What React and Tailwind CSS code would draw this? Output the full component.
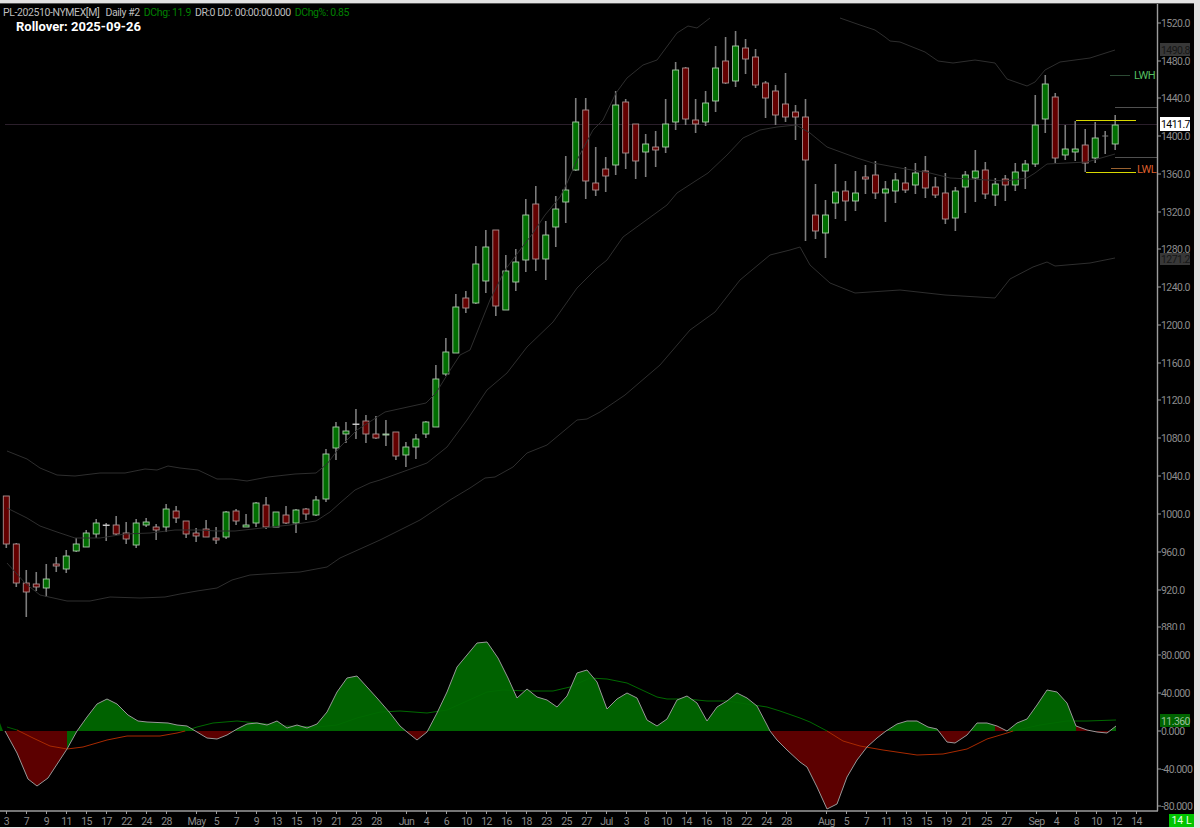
// Daily futures chart: candles with bands up top, oscillator below, price + time axes.
// All numbers are pixel positions on the 1200x828 page, the svg viewBox is offset to match.
const candles = [
  ["r", 496, 544, 496, 548], ["r", 544, 583, 543, 587], ["r", 583, 592, 570, 617], ["r", 584, 587, 572, 591],
  ["g", 579, 588, 564, 597], ["r", 564, 566, 557, 572], ["g", 556, 569, 550, 573], ["g", 544, 551, 538, 552],
  ["g", 533, 547, 530, 547], ["g", 523, 534, 519, 538], ["w", 525, 525.5, 523, 541], ["r", 525, 534, 516, 535],
  ["r", 533, 539, 522, 544], ["g", 523, 545, 519, 548], ["g", 522, 525, 518, 527], ["r", 527, 530, 524, 540],
  ["g", 509, 527, 504, 532], ["r", 511, 518, 506, 523], ["r", 521, 534, 521, 538], ["r", 533, 536, 528, 542],
  ["r", 529, 537, 520, 537], ["r", 538, 540, 527, 544], ["g", 512, 537, 511, 539], ["r", 511, 521, 509, 525],
  ["g", 525, 527, 514, 527], ["g", 503, 523, 502, 527], ["r", 505, 527, 497, 529], ["g", 512, 527, 512, 527],
  ["r", 515, 523, 506, 524], ["g", 510, 523, 509, 533], ["r", 509, 514, 508, 520], ["g", 500, 515, 496, 516],
  ["g", 454, 499, 449, 502], ["g", 427, 448, 422, 460], ["g", 431, 434, 422, 443], ["w", 424, 424.5, 409, 439],
  ["r", 421, 434, 415, 443], ["r", 434, 438, 416, 439], ["g", 434, 435, 420, 446], ["r", 432, 456, 432, 460],
  ["g", 447, 455, 442, 467], ["g", 439, 447, 434, 459], ["g", 422, 434, 421, 438], ["g", 379, 427, 365, 427],
  ["g", 352, 374, 338, 376], ["g", 307, 353, 294, 353], ["r", 298, 308, 291, 313], ["g", 264, 303, 246, 304],
  ["g", 247, 281, 230, 293], ["r", 230, 306, 230, 316], ["g", 271, 310, 255, 310], ["g", 262, 282, 249, 291],
  ["g", 215, 260, 199, 272], ["r", 204, 259, 186, 271], ["g", 235, 259, 221, 280], ["g", 209, 227, 196, 247],
  ["g", 190, 202, 156, 223], ["g", 122, 170, 98, 171], ["r", 110, 181, 98, 199], ["r", 183, 190, 147, 196],
  ["r", 169, 176, 157, 192], ["g", 105, 165, 91, 175], ["r", 102, 153, 99, 169], ["r", 124, 161, 124, 179],
  ["g", 144, 152, 134, 177], ["r", 147, 150, 131, 167], ["g", 124, 147, 99, 153], ["g", 70, 122, 62, 130],
  ["r", 68, 119, 67, 125], ["r", 120, 124, 99, 133], ["g", 103, 122, 91, 126], ["g", 68, 101, 46, 112],
  ["r", 61, 83, 37, 84], ["g", 46, 81, 31, 87], ["r", 48, 59, 39, 74], ["r", 57, 85, 49, 88],
  ["r", 83, 98, 81, 118], ["r", 91, 115, 85, 125], ["r", 104, 117, 73, 122], ["r", 112, 117, 105, 140],
  ["r", 117, 160, 99, 241], ["r", 215, 231, 184, 239], ["g", 215, 233, 200, 258], ["g", 192, 203, 164, 219],
  ["r", 191, 201, 181, 221], ["g", 193, 201, 171, 211], ["r", 177, 179, 165, 194], ["r", 175, 193, 161, 199],
  ["g", 189, 193, 181, 222], ["g", 180, 191, 173, 203], ["r", 183, 190, 167, 193], ["g", 173, 185, 163, 194],
  ["r", 171, 188, 156, 198], ["r", 187, 195, 177, 198], ["r", 193, 219, 173, 224], ["g", 191, 218, 187, 231],
  ["g", 175, 187, 171, 213], ["g", 171, 178, 150, 202], ["r", 170, 194, 162, 199], ["g", 184, 195, 178, 206],
  ["r", 179, 185, 175, 201], ["g", 172, 185, 163, 191], ["g", 164, 171, 160, 189], ["g", 125, 164, 95, 167],
  ["g", 84, 119, 75, 133], ["r", 97, 158, 93, 163], ["g", 149, 155, 125, 160], ["g", 149, 152, 121, 161],
  ["r", 145, 163, 129, 172], ["g", 138, 158, 122, 163], ["d", 136, 136, 131, 154], ["g", 125, 144, 115, 150],
];

const bands = [
  [[7, 451], [27, 459], [40, 468], [57, 475], [75, 476], [100, 473], [125, 473], [145, 469], [157, 470], [168, 466], [180, 468], [198, 470], [217, 479], [232, 479], [247, 481], [268, 477], [295, 474], [316, 473], [327, 464], [340, 447], [357, 430], [385, 412], [426, 403], [436, 393], [447, 375], [460, 355], [470, 350], [480, 325], [490, 300], [505, 270], [520, 250], [533, 233], [545, 215], [560, 197], [567, 183], [577, 160], [593, 130], [603, 120], [616, 93], [627, 78], [643, 65], [657, 60], [677, 33], [688, 26], [697, 28], [710, 18]],
  [[840, 18], [860, 25], [875, 30], [885, 37], [890, 41], [900, 42], [915, 48], [925, 52], [938, 61], [953, 63], [975, 60], [995, 63], [1007, 79], [1027, 86], [1035, 82], [1045, 70], [1060, 62], [1090, 58], [1115, 50]],
  [[7, 508], [27, 518], [40, 526], [57, 532], [75, 538], [100, 538], [125, 534], [150, 533], [175, 530], [200, 530], [217, 531], [235, 531], [262, 528], [290, 525], [316, 521], [330, 512], [340, 503], [355, 490], [370, 483], [380, 480], [427, 463], [447, 447], [467, 420], [487, 390], [507, 373], [527, 347], [553, 322], [577, 288], [597, 268], [607, 260], [623, 237], [667, 205], [677, 193], [697, 180], [708, 173], [727, 155], [743, 138], [760, 130], [777, 127], [796, 125], [810, 133], [827, 147], [857, 158], [873, 163], [900, 168], [930, 173], [950, 178], [987, 180], [1005, 181], [1027, 178], [1035, 173], [1047, 164], [1087, 162], [1115, 154]],
  [[7, 563], [25, 583], [40, 595], [67, 601], [90, 601], [110, 597], [140, 598], [165, 597], [180, 594], [197, 591], [217, 588], [232, 580], [250, 575], [265, 574], [300, 572], [327, 567], [340, 558], [380, 540], [420, 520], [450, 500], [470, 488], [485, 478], [495, 477], [513, 467], [527, 453], [547, 445], [577, 420], [587, 419], [600, 412], [625, 395], [660, 365], [690, 330], [715, 312], [740, 280], [770, 255], [790, 250], [800, 247], [810, 265], [830, 283], [855, 293], [900, 290], [945, 295], [995, 298], [1010, 279], [1033, 267], [1047, 262], [1055, 266], [1090, 263], [1115, 258]],
];

const osc = [[0, 723], [3, 731], [5, 731], [17, 753], [28, 779], [37, 786], [48, 778], [67, 749], [77, 731], [87, 717], [97, 704], [107, 699], [117, 704], [128, 715], [138, 721], [147, 722], [168, 723], [177, 725], [187, 726], [197, 732], [207, 738], [217, 739], [227, 735], [237, 729], [247, 724], [257, 723], [267, 725], [277, 721], [287, 728], [297, 725], [307, 728], [317, 724], [327, 712], [337, 692], [347, 678], [357, 676], [367, 687], [377, 698], [390, 713], [400, 726], [407, 732], [417, 740], [427, 732], [437, 713], [447, 692], [457, 667], [467, 655], [477, 643], [487, 642], [498, 658], [508, 678], [517, 698], [527, 689], [537, 697], [547, 700], [557, 707], [567, 696], [577, 673], [587, 670], [597, 682], [607, 709], [617, 699], [627, 693], [637, 698], [647, 720], [657, 726], [667, 719], [677, 700], [687, 696], [697, 703], [707, 721], [717, 707], [727, 701], [737, 693], [747, 698], [757, 706], [767, 725], [770, 731], [777, 740], [787, 750], [800, 762], [807, 767], [817, 787], [827, 809], [837, 804], [847, 777], [857, 760], [867, 747], [877, 738], [886, 731], [897, 724], [907, 721], [917, 721], [928, 727], [937, 729], [947, 742], [955, 743], [967, 735], [977, 723], [987, 723], [997, 726], [1007, 731], [1017, 723], [1027, 719], [1037, 705], [1047, 690], [1057, 692], [1067, 703], [1076, 726], [1087, 730], [1097, 732], [1107, 733], [1116, 726]];

// colour of the filled area is not just the sign, it flips a bit off the zero line
const areas = [
  ["g", 0, 3], ["r", 5, 67], ["g", 67, 195], ["r", 195, 233], ["g", 233, 406], ["r", 406, 427], ["g", 427, 770], ["r", 770, 886],
  ["g", 886, 938], ["r", 938, 970], ["g", 970, 995], ["r", 995, 1007], ["g", 1007, 1076], ["r", 1076, 1110], ["g", 1110, 1116],
];

const signal = [
  ["#005c00", [[7, 727], [17, 730]]],
  ["#a82a00", [[17, 730], [33, 738], [50, 746], [67, 749], [83, 747], [107, 740], [127, 736], [160, 736], [177, 733], [185, 731]]],
  ["#006a00", [[185, 731], [197, 727], [213, 723], [237, 721], [257, 723], [283, 726], [317, 727], [337, 725], [357, 718], [380, 712], [400, 711], [427, 713], [447, 710], [467, 701], [487, 692], [503, 690], [527, 691], [553, 691], [570, 687], [590, 678], [607, 679], [627, 683], [657, 697], [667, 699], [687, 699], [707, 701], [727, 701], [747, 704], [767, 707], [780, 711], [800, 718], [810, 722], [827, 731]]],
  ["#a82a00", [[827, 731], [843, 741], [860, 746], [883, 750], [917, 755], [943, 754], [967, 749], [987, 739], [1007, 733], [1013, 731]]],
  ["#006a00", [[1013, 731], [1040, 725], [1067, 721], [1087, 721], [1116, 720]]],
];

const prices = [
  ["1520.0", 23], ["1480.0", 61], ["1440.0", 98], ["1400.0", 136], ["1360.0", 174], ["1320.0", 212], ["1280.0", 249],
  ["1240.0", 287], ["1200.0", 325], ["1160.0", 363], ["1120.0", 400], ["1080.0", 438], ["1040.0", 476], ["1000.0", 514],
  ["960.0", 552], ["920.0", 590], ["880.0", 627], ["80.000", 655], ["40.000", 693], ["0.000", 731], ["-40.000", 769], ["-80.000", 806],
];

const dates = [
  ["3", 6], ["7", 26], ["9", 46], ["11", 66], ["15", 86], ["17", 106], ["22", 126], ["24", 146], ["28", 166], ["May", 196],
  ["5", 216], ["7", 236], ["9", 256], ["13", 276], ["15", 296], ["19", 316], ["21", 336], ["23", 356], ["28", 376], ["Jun", 406],
  ["4", 426], ["6", 446], ["10", 466], ["12", 486], ["16", 506], ["18", 526], ["23", 546], ["25", 566], ["27", 586], ["Jul", 606],
  ["3", 626], ["8", 646], ["10", 666], ["14", 686], ["16", 706], ["18", 726], ["22", 746], ["24", 766], ["28", 786], ["Aug", 826],
  ["5", 846], ["7", 866], ["11", 886], ["13", 906], ["15", 926], ["19", 946], ["21", 966], ["25", 986], ["27", 1006], ["Sep", 1036],
  ["4", 1056], ["8", 1076], ["10", 1096], ["12", 1116], ["14", 1136],
];

const toPath = (pts) => pts.map((p) => p.join(",")).join(" ");

function oscAt(x) {
  for (let i = 1; i < osc.length; i++) {
    const [x0, y0] = osc[i - 1];
    const [x1, y1] = osc[i];
    if (x >= x0 && x <= x1) return y0 + ((y1 - y0) * (x - x0)) / (x1 - x0);
  }
  return 731;
}

function areaPoints(from, to) {
  const mid = osc.filter(([x]) => x > from && x < to);
  return toPath([[from, 731], [from, oscAt(from)], ...mid, [to, oscAt(to)], [to, 731]]);
}

function Candle({ c, i }) {
  const [kind, top, bottom, hi, lo] = c;
  const x = 6.3 + i * 9.99;
  if (kind === "d") {
    // plain gray cross, open == close
    return (
      <g stroke="#7c7c7c">
        <line x1={x} x2={x} y1={hi} y2={lo} strokeWidth="1.6" />
        <line x1={x - 3} x2={x + 3} y1={top} y2={top} />
      </g>
    );
  }
  const fill = kind === "g" ? "#006e00" : kind === "r" ? "#640000" : "#cfcfcf";
  const edge = kind === "w" ? "#cfcfcf" : kind === "g" ? "#a8c8a8" : "#a89090";
  return (
    <g>
      <line x1={x} x2={x} y1={hi} y2={lo} stroke="#7c7c7c" strokeWidth="1.6" />
      <rect x={x - 3} y={top} width="6" height={bottom - top} fill={fill} stroke={edge} strokeWidth="0.9" />
    </g>
  );
}

export default function App() {
  return (
    <div className="h-[828px] w-[1200px] overflow-hidden bg-[#e2e2e2] pt-[3px] pr-[6px] pb-[1px] [font-family:Roboto,sans-serif]">
      <div className="relative h-full border-t border-[#555] bg-black">
        <svg viewBox="0 4 1194 823" className="block h-full w-full tracking-[-0.55px]">
          <defs>
            <clipPath id="pricePane">
              <rect x="0" y="0" width="1194" height="630" />
            </clipPath>
          </defs>

          {/* last price crosshair */}
          <line x1="5" x2="1157" y1="124.5" y2="124.5" stroke="#2b1f2b" />

          {candles.map((c, i) => (
            <Candle key={i} c={c} i={i} />
          ))}

          {bands.map((b, i) => (
            <polyline key={i} points={toPath(b)} fill="none" stroke="#2e2e2e" strokeWidth="1" />
          ))}

          {/* weekly high/low markers */}
          <line x1="1076" x2="1136" y1="120.5" y2="120.5" stroke="#d8d800" />
          <line x1="1086" x2="1136" y1="172.5" y2="172.5" stroke="#d8d800" />
          <line x1="1115" x2="1157" y1="107.5" y2="107.5" stroke="#505050" />
          <line x1="1115" x2="1157" y1="157.5" y2="157.5" stroke="#505050" />
          <line x1="1110" x2="1130" y1="75.5" y2="75.5" stroke="#2c4a34" />
          <line x1="1111" x2="1131" y1="168.5" y2="168.5" stroke="#9a6230" />
          <text x="1134" y="79" fontSize="11" fill="#55bf60">LWH</text>
          <text x="1137" y="173" fontSize="11" fill="#dd5f2c">LWL</text>

          {/* oscillator */}
          {areas.map(([kind, from, to]) => (
            <polygon key={from} points={areaPoints(from, to)} fill={kind === "g" ? "#006200" : "#5c0000"} />
          ))}
          {signal.map(([color, pts], i) => (
            <polyline key={i} points={toPath(pts)} fill="none" stroke={color} strokeWidth="1" />
          ))}
          <polyline points={toPath(osc.slice(2))} fill="none" stroke="#989898" strokeWidth="1" />

          {/* axes */}
          <line x1="1157.5" x2="1157.5" y1="4" y2="811" stroke="#9c9c9c" strokeWidth="1.4" />
          <line x1="0" x2="1158" y1="811" y2="811" stroke="#9c9c9c" strokeWidth="1.4" />
          {prices.map(([label, y]) => (
            <g key={label} clipPath={y < 630 ? "url(#pricePane)" : undefined}>
              <line x1="1157" x2="1161" y1={y} y2={y} stroke="#9c9c9c" />
              <text x="1161" y={y + 4} fontSize="10.5" fill="#8c8c8c">{label}</text>
            </g>
          ))}
          {dates.map(([label, x], i) => (
            <g key={i}>
              <line x1={x + 0.5} x2={x + 0.5} y1="811" y2="814" stroke="#9c9c9c" />
              <text x={x + 0.5} y="825" fontSize="10.5" fill="#8c8c8c" textAnchor="middle">{label}</text>
            </g>
          ))}

          {/* value tags on the price axis */}
          <rect x="1160" y="43" width="30" height="13" fill="#383838" />
          <text x="1161" y="54" fontSize="10.5" fill="#161616">1490.8</text>
          <rect x="1160" y="253" width="30" height="12" fill="#383838" />
          <text x="1161" y="263" fontSize="10.5" fill="#161616">1271.2</text>
          <rect x="1160" y="117" width="30" height="14" fill="#ffffff" />
          <text x="1161" y="128" fontSize="10.5" fill="#000000">1411.7</text>
          <rect x="1160" y="714" width="30" height="13" fill="#006400" />
          <text x="1161" y="725" fontSize="10.5" fill="#9cc09c">11.360</text>
        </svg>

        <div className="absolute left-[3px] top-[1px] flex gap-[4px] text-[10.5px] leading-[16px] tracking-[-0.4px] text-[#bdbdbd]">
          <span>PL-202510-NYMEX[M]</span>
          <span className="ml-[2px]">Daily #2</span>
          <span className="text-[#008000]">DChg: 11.9</span>
          <span>DR:0 DD: 00:00:00.000</span>
          <span className="text-[#008000]">DChg%: 0.85</span>
        </div>
        <div className="absolute left-[16px] top-[14px] text-[13px] font-bold leading-[18px] text-white">
          Rollover: 2025-09-26
        </div>
        <div className="absolute bottom-0 right-0 flex h-[13px] w-[25px] items-center justify-center bg-[#00c400] text-[10.5px] text-[#e8ffe8]">
          14 L
        </div>
      </div>
    </div>
  );
}
